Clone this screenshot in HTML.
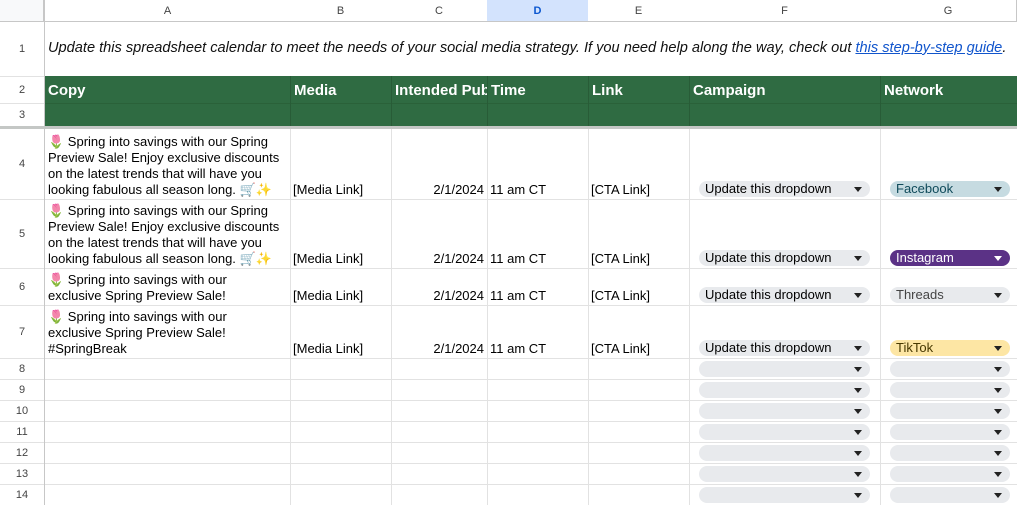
<!DOCTYPE html>
<html><head><meta charset="utf-8"><style>
*{margin:0;padding:0;box-sizing:border-box}
html,body{width:1017px;height:505px;overflow:hidden}
body{background:#fff;font-family:"Liberation Sans",Arial,sans-serif;position:relative;color:#000}
.a{position:absolute}
.hl{position:absolute;left:0;width:1017px;height:1px;background:#e2e2e2}
.vl{position:absolute;top:126px;height:379px;width:1px;background:#e2e2e2}
.ch{position:absolute;top:0;height:22px;font-size:11px;color:#444;text-align:center;line-height:22px;border-right:1px solid #c7c7c7;border-bottom:1px solid #c7c7c7;background:#fff}
.rn{position:absolute;left:0;width:45px;font-size:11px;color:#444;text-align:center;border-right:1px solid #c7c7c7;display:flex;align-items:center;justify-content:center}
.c{position:absolute;font-size:13px;line-height:16px;padding:0 3px 1px 3px;display:flex;align-items:flex-end;white-space:nowrap}
.h{position:absolute;top:82px;font-size:15px;font-weight:bold;color:#fff}
.dd{position:absolute;height:16px;border-radius:8px;background:#e8eaed;font-size:13px;line-height:16px;padding-left:6px}
.dd:after{content:"";position:absolute;right:8px;top:6px;border-left:4px solid transparent;border-right:4px solid transparent;border-top:5px solid #222}
.dd.w:after{border-top-color:#fff}
</style></head><body>
<div class="ch" style="left:0;width:46px;background:#f8f9fa;border-right:3px solid #c7c7c7"></div>
<div class="ch" style="left:45px;width:246px">A</div>
<div class="ch" style="left:290px;width:102px">B</div>
<div class="ch" style="left:391px;width:97px">C</div>
<div class="ch" style="left:487px;width:102px;background:#d3e3fd;color:#0b57d0;font-weight:bold">D</div>
<div class="ch" style="left:588px;width:102px">E</div>
<div class="ch" style="left:689px;width:192px">F</div>
<div class="ch" style="left:880px;width:137px">G</div>

<div class="vl" style="left:290px"></div>
<div class="vl" style="left:391px"></div>
<div class="vl" style="left:487px"></div>
<div class="vl" style="left:588px"></div>
<div class="vl" style="left:689px"></div>
<div class="vl" style="left:880px"></div>
<div class="hl" style="top:76px"></div>
<div class="hl" style="top:103px"></div>
<div class="hl" style="top:199px"></div>
<div class="hl" style="top:268px"></div>
<div class="hl" style="top:305px"></div>
<div class="hl" style="top:358px"></div>
<div class="hl" style="top:379px"></div>
<div class="hl" style="top:400px"></div>
<div class="hl" style="top:421px"></div>
<div class="hl" style="top:442px"></div>
<div class="hl" style="top:463px"></div>
<div class="hl" style="top:484px"></div>

<div class="a" style="left:45px;top:76px;width:972px;height:50px;background:#2f6b42"></div>
<div class="a" style="left:45px;top:103px;width:972px;height:1px;background:#2a6139"></div>
<div class="a" style="left:290px;top:76px;width:1px;height:50px;background:#285c37"></div>
<div class="a" style="left:391px;top:76px;width:1px;height:50px;background:#285c37"></div>
<div class="a" style="left:487px;top:76px;width:1px;height:50px;background:#285c37"></div>
<div class="a" style="left:588px;top:76px;width:1px;height:50px;background:#285c37"></div>
<div class="a" style="left:689px;top:76px;width:1px;height:50px;background:#285c37"></div>
<div class="a" style="left:880px;top:76px;width:1px;height:50px;background:#285c37"></div>
<div class="h" style="left:48px">Copy</div>
<div class="h" style="left:294px">Media</div>
<div class="h" style="left:395px;width:92px;overflow:hidden;white-space:nowrap">Intended Publish Date</div>
<div class="h" style="left:491px">Time</div>
<div class="h" style="left:592px">Link</div>
<div class="h" style="left:693px">Campaign</div>
<div class="h" style="left:884px">Network</div>
<div class="a" style="left:0;top:126px;width:1017px;height:3px;background:#c4c7c5"></div>

<div class="rn" style="top:22px;height:54px">1</div>
<div class="rn" style="top:76px;height:27px">2</div>
<div class="rn" style="top:103px;height:23px">3</div>
<div class="rn" style="top:129px;height:70px">4</div>
<div class="rn" style="top:199px;height:69px">5</div>
<div class="rn" style="top:268px;height:37px">6</div>
<div class="rn" style="top:305px;height:53px">7</div>
<div class="rn" style="top:358px;height:21px">8</div>
<div class="rn" style="top:379px;height:21px">9</div>
<div class="rn" style="top:400px;height:21px">10</div>
<div class="rn" style="top:421px;height:21px">11</div>
<div class="rn" style="top:442px;height:21px">12</div>
<div class="rn" style="top:463px;height:21px">13</div>
<div class="rn" style="top:484px;height:21px">14</div>

<div class="a" style="left:48px;top:40px;font-size:14.6px;font-style:italic;white-space:nowrap;color:#111">Update this spreadsheet calendar to meet the needs of your social media strategy. If you need help along the way, check out <span style="color:#1155cc;text-decoration:underline">this step-by-step guide</span>.</div>

<div class="c" style="left:45px;top:129px;width:245px;height:70px">🌷 Spring into savings with our Spring<br>Preview Sale! Enjoy exclusive discounts<br>on the latest trends that will have you<br>looking fabulous all season long. 🛒✨</div>
<div class="c" style="left:290px;top:129px;width:101px;height:70px">[Media Link]</div>
<div class="c" style="left:391px;top:129px;width:96px;height:70px;justify-content:flex-end">2/1/2024</div>
<div class="c" style="left:487px;top:129px;width:101px;height:70px">11 am CT</div>
<div class="c" style="left:588px;top:129px;width:101px;height:70px">[CTA Link]</div>
<div class="dd" style="left:699px;top:181px;width:171px">Update this dropdown</div>
<div class="dd" style="left:890px;top:181px;width:120px;background:#c6dbe1;color:#0f4a5a">Facebook</div>

<div class="c" style="left:45px;top:199px;width:245px;height:69px">🌷 Spring into savings with our Spring<br>Preview Sale! Enjoy exclusive discounts<br>on the latest trends that will have you<br>looking fabulous all season long. 🛒✨</div>
<div class="c" style="left:290px;top:199px;width:101px;height:69px">[Media Link]</div>
<div class="c" style="left:391px;top:199px;width:96px;height:69px;justify-content:flex-end">2/1/2024</div>
<div class="c" style="left:487px;top:199px;width:101px;height:69px">11 am CT</div>
<div class="c" style="left:588px;top:199px;width:101px;height:69px">[CTA Link]</div>
<div class="dd" style="left:699px;top:250px;width:171px">Update this dropdown</div>
<div class="dd w" style="left:890px;top:250px;width:120px;background:#5b3286;color:#fff">Instagram</div>

<div class="c" style="left:45px;top:268px;width:245px;height:37px">🌷 Spring into savings with our<br>exclusive Spring Preview Sale!</div>
<div class="c" style="left:290px;top:268px;width:101px;height:37px">[Media Link]</div>
<div class="c" style="left:391px;top:268px;width:96px;height:37px;justify-content:flex-end">2/1/2024</div>
<div class="c" style="left:487px;top:268px;width:101px;height:37px">11 am CT</div>
<div class="c" style="left:588px;top:268px;width:101px;height:37px">[CTA Link]</div>
<div class="dd" style="left:699px;top:287px;width:171px">Update this dropdown</div>
<div class="dd" style="left:890px;top:287px;width:120px;color:#444">Threads</div>

<div class="c" style="left:45px;top:305px;width:245px;height:53px">🌷 Spring into savings with our<br>exclusive Spring Preview Sale!<br>#SpringBreak</div>
<div class="c" style="left:290px;top:305px;width:101px;height:53px">[Media Link]</div>
<div class="c" style="left:391px;top:305px;width:96px;height:53px;justify-content:flex-end">2/1/2024</div>
<div class="c" style="left:487px;top:305px;width:101px;height:53px">11 am CT</div>
<div class="c" style="left:588px;top:305px;width:101px;height:53px">[CTA Link]</div>
<div class="dd" style="left:699px;top:340px;width:171px">Update this dropdown</div>
<div class="dd" style="left:890px;top:340px;width:120px;background:#fde6a4;color:#473800">TikTok</div>

<div class="dd" style="left:699px;top:361px;width:171px"></div><div class="dd" style="left:890px;top:361px;width:120px"></div>
<div class="dd" style="left:699px;top:382px;width:171px"></div><div class="dd" style="left:890px;top:382px;width:120px"></div>
<div class="dd" style="left:699px;top:403px;width:171px"></div><div class="dd" style="left:890px;top:403px;width:120px"></div>
<div class="dd" style="left:699px;top:424px;width:171px"></div><div class="dd" style="left:890px;top:424px;width:120px"></div>
<div class="dd" style="left:699px;top:445px;width:171px"></div><div class="dd" style="left:890px;top:445px;width:120px"></div>
<div class="dd" style="left:699px;top:466px;width:171px"></div><div class="dd" style="left:890px;top:466px;width:120px"></div>
<div class="dd" style="left:699px;top:487px;width:171px"></div><div class="dd" style="left:890px;top:487px;width:120px"></div>
</body></html>
